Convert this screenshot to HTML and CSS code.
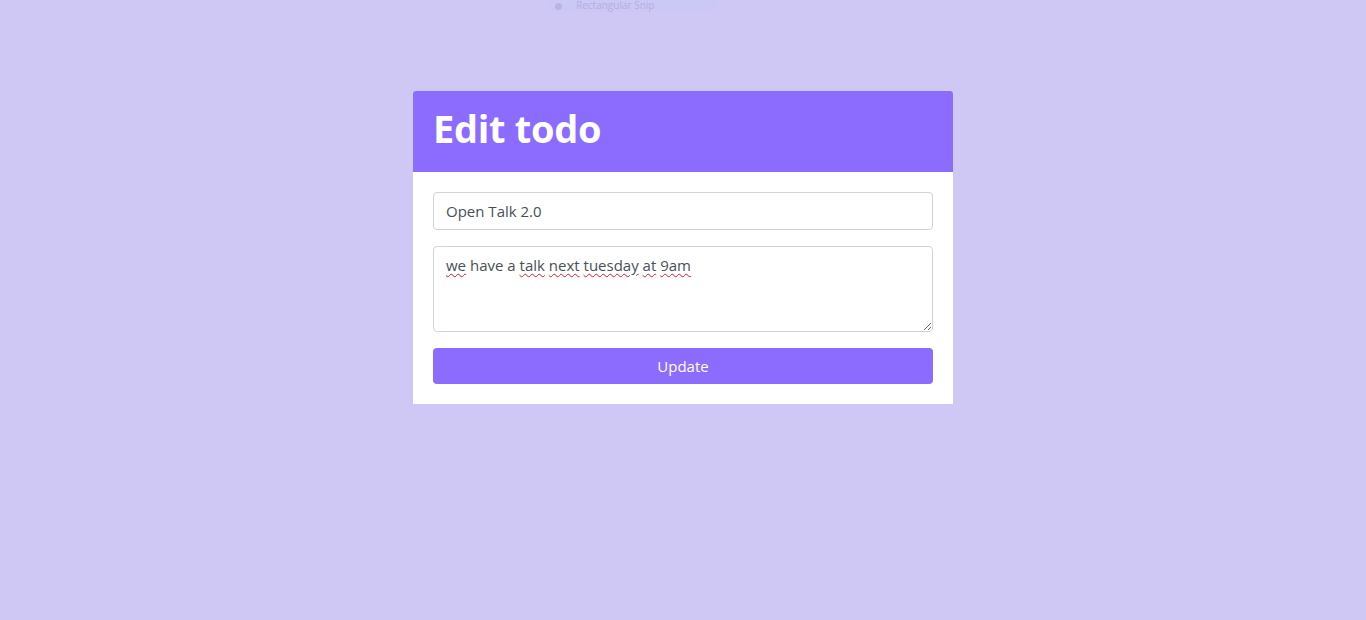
FILE: index.html
```html
<!DOCTYPE html>
<html lang="en">
<head>
<meta charset="utf-8">
<title>Edit todo</title>
<link rel="stylesheet" href="styles.css">
</head>
<body>
<div class="snip"><span class="snip-dot"></span><span class="snip-label">Rectangular Snip</span></div>
<main class="page">
  <section class="card">
    <header class="card-header">
      <h1 class="card-title">Edit todo</h1>
    </header>
    <form class="card-body">
      <input class="field" type="text" value="Open Talk 2.0">
      <div class="field area" role="textbox" aria-multiline="true"><span class="sp">we</span> have a <span class="sp">talk</span> <span class="sp">next</span> <span class="sp">tuesday</span> <span class="sp">at</span> <span class="sp">9am</span></div>
      <button class="btn" type="button">Update</button>
    </form>
  </section>
</main>
</body>
</html>
```
FILE: styles.css
```css
html, body {
  margin: 0;
  padding: 0;
}
body {
  background: #d0c8f4;
  font-family: "Open Sans", "Noto Sans", sans-serif;
  min-height: 620px;
  position: relative;
}
.snip {
  position: absolute;
  left: 547px;
  top: 0;
  width: 171px;
  height: 12px;
  background: #cbc8f6;
  display: flex;
  align-items: center;
  gap: 14px;
  padding-left: 8px;
  box-sizing: border-box;
  overflow: visible;
}
.snip-dot {
  width: 7px;
  height: 7px;
  border-radius: 50%;
  background: #b9b3e6;
  flex: none;
}
.snip-label {
  font-size: 10px;
  line-height: 10px;
  color: #b4aee0;
  font-family: "Open Sans", sans-serif;
  margin-top: -2px;
}
.page {
  display: flex;
  justify-content: center;
  padding-top: 91px;
}
.card {
  width: 540px;
  background: #fff;
  border-radius: 4px 4px 0 0;
}
.card-header {
  background: #8c6bff;
  height: 81px;
  display: flex;
  align-items: center;
  padding: 0 20px;
  border-radius: 3px 3px 0 0;
}
.card-title {
  margin: 0;
  color: #fff;
  font-size: 38px;
  font-weight: 700;
  letter-spacing: -0.3px;
  line-height: 1;
  padding-bottom: 7px;
}
.card-body {
  padding: 20px;
  display: flex;
  flex-direction: column;
  gap: 16px;
  margin: 0;
}
.field {
  box-sizing: border-box;
  width: 100%;
  border: 1px solid #ced4da;
  border-radius: 4px;
  font-family: "Open Sans", "Noto Sans", sans-serif;
  font-size: 15px;
  color: #495057;
  padding: 0 12px;
  background: #fff;
  outline: none;
}
input.field {
  height: 38px;
}
.area {
  height: 86px;
  padding: 6px 12px;
  line-height: 24px;
  resize: both;
  overflow: auto;
}
.sp {
  text-decoration: underline wavy #d0202c;
  text-decoration-thickness: 1px;
  text-underline-offset: 2px;
}
.btn {
  height: 36px;
  border: 0;
  border-radius: 4px;
  background: #8c6bff;
  color: #fff;
  font-family: "Open Sans", "Noto Sans", sans-serif;
  font-size: 15px;
  cursor: pointer;
}
```
